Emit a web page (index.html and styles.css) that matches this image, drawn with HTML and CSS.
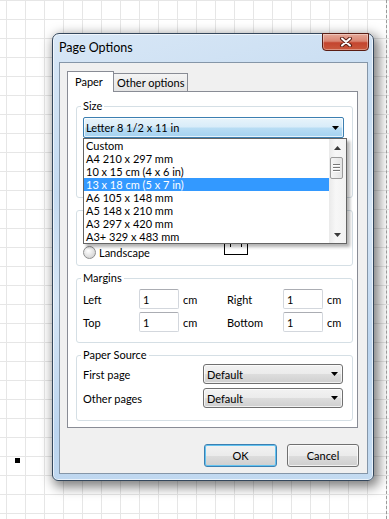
FILE: index.html
```html
<!DOCTYPE html>
<html lang="en">
<head>
    <meta charset="UTF-8" />
    <title>Page Options</title>
    <link rel="stylesheet" href="styles.css">
</head>
<body>
    <div class="page-edge"></div>
    <div class="shape-handle"></div>

    <div class="dialog">
        <div class="titlebar">
            <span class="title">Page Options</span>
            <button type="button" class="close-btn">
                <svg width="14" height="10" viewBox="0 0 14 10">
                    <path d="M3 1.5l8 7M11 1.5l-8 7" stroke="#5b2016" stroke-width="4" stroke-linecap="round" fill="none"/>
                    <path d="M3 1.5l8 7M11 1.5l-8 7" stroke="#fff" stroke-width="2" stroke-linecap="round" fill="none"/>
                </svg>
            </button>
        </div>

        <div class="client">
            <div class="tabs">
                <div class="tab active">Paper</div>
                <div class="tab">Other options</div>
            </div>

            <div class="tab-panel">
                <fieldset class="group group-size">
                    <legend>Size</legend>
                    <div class="combo-wrap">
                        <div class="combo combo-open">
                            <span>Letter 8 1/2 x 11 in</span>
                            <svg class="arrow" width="7" height="4" viewBox="0 0 7 4"><path d="M0 0h7L3.5 4z"/></svg>
                        </div>
                        <div class="droplist">
                            <ul class="droplist-items">
                                <li>Custom</li>
                                <li>A4 210 x 297 mm</li>
                                <li>10 x 15 cm (4 x 6 in)</li>
                                <li class="selected">13 x 18 cm (5 x 7 in)</li>
                                <li>A6 105 x 148 mm</li>
                                <li>A5 148 x 210 mm</li>
                                <li>A3 297 x 420 mm</li>
                                <li>A3+ 329 x 483 mm</li>
                            </ul>
                            <div class="scrollbar">
                                <div class="scroll-btn">
                                    <svg width="7" height="4" viewBox="0 0 7 4"><path d="M0 4h7L3.5 0z"/></svg>
                                </div>
                                <div class="thumb"><i></i><i></i><i></i></div>
                                <div class="scroll-track"></div>
                                <div class="scroll-btn">
                                    <svg width="7" height="4" viewBox="0 0 7 4"><path d="M0 0h7L3.5 4z"/></svg>
                                </div>
                            </div>
                        </div>
                    </div>
                </fieldset>

                <!-- orientation group: its caption and first option sit under the open list -->
                <fieldset class="group group-orientation">
                    <div class="orient-row">
                        <div class="radios">
                            <span class="radio"><span class="radio-dot checked"></span></span>
                            <label class="radio"><span class="radio-dot"></span>Landscape</label>
                        </div>
                        <div class="paper-icon"><i></i><i></i></div>
                    </div>
                </fieldset>

                <fieldset class="group group-margins">
                    <legend>Margins</legend>
                    <div class="margin-grid">
                        <span>Left</span>
                        <input class="field" type="text" value="1">
                        <span class="unit">cm</span>
                        <span>Right</span>
                        <input class="field" type="text" value="1">
                        <span class="unit">cm</span>

                        <span>Top</span>
                        <input class="field" type="text" value="1">
                        <span class="unit">cm</span>
                        <span>Bottom</span>
                        <input class="field" type="text" value="1">
                        <span class="unit">cm</span>
                    </div>
                </fieldset>

                <fieldset class="group group-source">
                    <legend>Paper Source</legend>
                    <div class="source-grid">
                        <span>First page</span>
                        <div class="combo">
                            <span>Default</span>
                            <svg class="arrow" width="7" height="4" viewBox="0 0 7 4"><path d="M0 0h7L3.5 4z"/></svg>
                        </div>
                        <span>Other pages</span>
                        <div class="combo">
                            <span>Default</span>
                            <svg class="arrow" width="7" height="4" viewBox="0 0 7 4"><path d="M0 0h7L3.5 4z"/></svg>
                        </div>
                    </div>
                </fieldset>
            </div>

            <div class="actions">
                <button type="button" class="btn btn-default">OK</button>
                <button type="button" class="btn btn-cancel">Cancel</button>
            </div>
        </div>
    </div>
</body>
</html>
```

FILE: styles.css
```css
/* Canvas */
body {
    margin: 0;
    width: 389px;
    height: 519px;
    overflow: hidden;
    position: relative;
    box-sizing: border-box;
    padding: 33px 0 0 52px;
    font-family: Lato, "Liberation Sans", sans-serif;
    font-size: 11px;
    color: #000;
    background-color: #fff;
    background-image:
        linear-gradient(to right, #e6e6e6 1px, transparent 1px),
        linear-gradient(to bottom, #e6e6e6 1px, transparent 1px);
    background-size: 19px 19px;
    background-position: 6px 0;
}

.page-edge {
    position: absolute;
    top: 0;
    bottom: 0;
    left: 386px;
    border-left: 1px dashed #9a9a9a;
}

.shape-handle {
    position: absolute;
    left: 15px;
    top: 458px;
    width: 5px;
    height: 5px;
    background: #000;
}

/* Window frame */
.dialog {
    width: 322px;
    height: 448px;
    box-sizing: border-box;
    display: flex;
    flex-direction: column;
    border: 1px solid #34475c;
    border-radius: 7px 7px 6px 6px;
    background: linear-gradient(165deg, #d8e7f6 0%, #c5dbf1 30%, #d6e6f6 50%, #bcd5ef 75%, #c4dbf1 100%);
    box-shadow: inset 0 0 0 1px rgba(255, 255, 255, 0.65), 3px 4px 12px 2px rgba(0, 0, 0, 0.5);
}

.titlebar {
    height: 28px;
    display: flex;
    align-items: flex-start;
    padding-left: 6px;
}

.title {
    font-size: 12.5px;
    line-height: 28px;
}

.close-btn {
    margin: -1px 4px 0 auto;
    width: 47px;
    height: 18px;
    padding: 0;
    display: flex;
    align-items: center;
    justify-content: center;
    border: 1px solid #5a1d14;
    border-radius: 0 0 4px 4px;
    background: linear-gradient(#e5a898 0%, #d98572 45%, #c4452f 55%, #c9593d 100%);
    box-shadow: inset 0 0 0 1px rgba(255, 255, 255, 0.35);
}

/* Client area */
.client {
    width: 309px;
    height: 412px;
    margin-left: 6px;
    box-sizing: border-box;
    padding: 8px 8px 0 7px;
    display: flex;
    flex-direction: column;
    border: 1px solid #8596a8;
    background: #f0f0f0;
}

.tabs {
    height: 20px;
    display: flex;
    align-items: flex-end;
}

.tab {
    width: 75px;
    height: 18px;
    box-sizing: border-box;
    margin-left: -1px;
    padding-left: 3px;
    line-height: 17px;
    border: 1px solid #898c95;
    border-bottom: none;
    background: linear-gradient(#f4f4f4, #e4e4e4);
}

.tab.active {
    width: 47px;
    height: 21px;
    margin: 0 0 -1px 0;
    padding-left: 7px;
    line-height: 19px;
    background: #fff;
    position: relative;
    z-index: 1;
}

.tab-panel {
    width: 291px;
    height: 337px;
    box-sizing: border-box;
    padding: 7px 4px 0 8px;
    border: 1px solid #898c95;
    background: #fff;
}

/* Group boxes */
.group {
    margin: 0 0 5px;
    padding: 0 6px;
    min-width: 0;
    box-sizing: border-box;
    border: 1px solid #d5dfe5;
    border-radius: 3px;
}

.group legend {
    padding: 0 2px;
    margin-left: -2px;
    line-height: 14px;
}

.group-size { height: 99px; padding-top: 4px; margin-bottom: 12px; }
.group-orientation { height: 56px; }
.group-margins { height: 72px; }
.group-source { height: 73px; margin-bottom: 0; }

/* Combo boxes */
.combo-wrap {
    position: relative;
}

.combo {
    height: 20px;
    box-sizing: border-box;
    display: flex;
    align-items: center;
    justify-content: space-between;
    padding: 0 4px 0 3px;
    border: 1px solid #707070;
    border-radius: 3px;
    background: linear-gradient(#f2f2f2 0%, #ebebeb 50%, #dddddd 51%, #cfcfcf 100%);
    box-shadow: inset 0 0 0 1px rgba(255, 255, 255, 0.7);
}

.combo-open {
    width: 261px;
    height: 21px;
    padding-left: 2px;
    border-color: #3c7fb1;
    border-radius: 2px;
    background: linear-gradient(#e8f4fb 0%, #d8ecf9 48%, #b9ddf4 52%, #a4d2f1 100%);
}

.droplist {
    position: absolute;
    top: 100%;
    left: 0;
    width: 264px;
    height: 106px;
    box-sizing: border-box;
    display: flex;
    border: 1px solid #646464;
    background: #fff;
    box-shadow: 3px 3px 3px rgba(0, 0, 0, 0.3);
    z-index: 2;
}

.droplist-items {
    flex: 1;
    margin: 0;
    padding: 0;
    list-style: none;
}

.droplist-items li {
    height: 13px;
    line-height: 13px;
    padding-left: 2px;
    white-space: nowrap;
}

.droplist-items li.selected {
    background: #3399ff;
    color: #fff;
}

.scrollbar {
    width: 17px;
    display: flex;
    flex-direction: column;
    background: linear-gradient(to right, #eaeaea, #f7f7f7 40%, #f2f2f2);
}

.scroll-btn {
    height: 17px;
    display: flex;
    align-items: center;
    justify-content: center;
}

.scroll-btn svg {
    fill: #3a3a3a;
}

.thumb {
    width: 13px;
    height: 22px;
    margin: 1px 0 0 1px;
    box-sizing: border-box;
    display: flex;
    flex-direction: column;
    align-items: center;
    justify-content: center;
    gap: 1px;
    border: 1px solid #9b9b9b;
    border-radius: 2px;
    background: linear-gradient(to right, #f5f5f5, #e3e3e3);
}

.thumb i {
    width: 7px;
    height: 1px;
    background: #777;
    border-bottom: 1px solid #fff;
}

.scroll-track {
    flex: 1;
}

/* Orientation */
.orient-row {
    display: flex;
    padding-top: 9px;
}

.radios {
    width: 141px;
    display: flex;
    flex-direction: column;
    gap: 2px;
}

.radio {
    height: 20px;
    display: flex;
    align-items: center;
    gap: 3px;
}

.radio-dot {
    width: 13px;
    height: 13px;
    box-sizing: border-box;
    border: 1px solid #8e8f8f;
    border-radius: 50%;
    background: radial-gradient(circle at 40% 35%, #ffffff, #d6d6d6 75%);
}

.radio-dot.checked {
    background: radial-gradient(circle, #2a7ccf 0, #1d5fa8 2px, #e8e8e8 3px, #d0d0d0 75%);
}

.paper-icon {
    width: 24px;
    height: 23px;
    margin-top: 12px;
    box-sizing: border-box;
    display: flex;
    gap: 10px;
    padding: 11px 0 0 5px;
    border: 1px solid #000;
}

.paper-icon i {
    width: 1px;
    height: 3px;
    background: #000;
}

/* Margins */
.margin-grid {
    display: grid;
    grid-template-columns: 56px 40px 48px 56px 40px auto;
    row-gap: 3px;
    align-items: center;
    padding-top: 4px;
}

.unit {
    padding-left: 4px;
}

.field {
    width: 40px;
    height: 20px;
    box-sizing: border-box;
    margin: 0;
    padding: 0 3px;
    font: inherit;
    color: #000;
    border: 1px solid #d3d7dd;
    border-top-color: #abadb3;
    border-radius: 2px;
    background: #fff;
}

/* Paper source */
.source-grid {
    display: grid;
    grid-template-columns: 120px 140px;
    row-gap: 4px;
    align-items: center;
    padding-top: 2px;
}

/* Buttons */
.actions {
    display: flex;
    justify-content: flex-end;
    gap: 10px;
    margin-top: 16px;
}

.btn {
    width: 72px;
    height: 23px;
    padding: 0;
    font: inherit;
    color: #000;
    border: 1px solid #707070;
    border-radius: 3px;
    background: linear-gradient(#f2f2f2 0%, #ebebeb 50%, #dddddd 51%, #cfcfcf 100%);
    box-shadow: inset 0 0 0 1px rgba(255, 255, 255, 0.7);
}

.btn-default {
    width: 73px;
    border-color: #3c7fb1;
    box-shadow: inset 0 0 0 1px #63c3f0;
}
```
